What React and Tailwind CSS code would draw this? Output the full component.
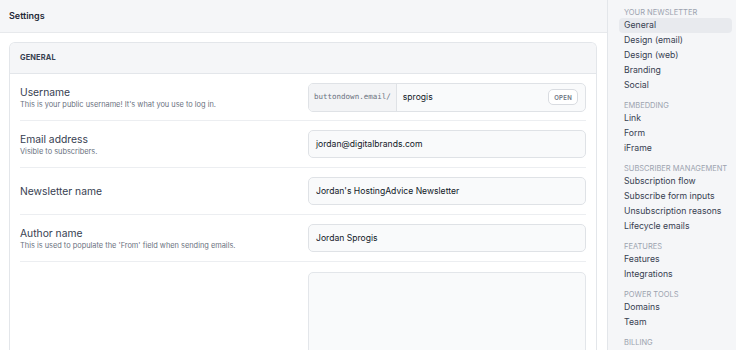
import React from 'react';

const nav = [
  { title: 'Your newsletter', items: ['General', 'Design (email)', 'Design (web)', 'Branding', 'Social'] },
  { title: 'Embedding', items: ['Link', 'Form', 'iFrame'] },
  {
    title: 'Subscriber management',
    items: ['Subscription flow', 'Subscribe form inputs', 'Unsubscription reasons', 'Lifecycle emails'],
  },
  { title: 'Features', items: ['Features', 'Integrations'] },
  { title: 'Power tools', items: ['Domains', 'Team'] },
  { title: 'Billing', items: ['Plans'] },
];

function Row({ label, hint, children }) {
  return (
    <div className="h-[46px] flex items-center justify-between">
      <div className="flex flex-col pt-[1px]">
        <span className="text-[10.3px] leading-[13px] text-[#374151]">{label}</span>
        {hint && <span className="text-[7.4px] leading-[10px] text-[#6b7280] mt-[1px]">{hint}</span>}
      </div>
      <div className="w-[278px]">{children}</div>
    </div>
  );
}

function Input({ value }) {
  return (
    <div className="h-[28px] rounded-[5px] border border-[#dfe2e6] bg-[#f9fafb] flex items-center px-[7px] text-[8.6px] text-[#111827]">
      {value}
    </div>
  );
}

export default function App() {
  return (
    <div className="flex w-[736px] h-[350px] overflow-hidden bg-white" style={{ fontFamily: 'Inter, "Noto Sans", sans-serif' }}>
      <div className="w-[607px] shrink-0 flex flex-col">
        <div className="h-[33px] shrink-0 bg-[#f5f6f8] border-b border-[#e7e9ec] flex items-center px-[9px]">
          <span className="text-[9px] font-semibold text-[#1f2937]">Settings</span>
        </div>
        <div className="px-[9px] pt-[9px] pr-[10px]">
          <div className="rounded-t-[6px] border border-[#e3e6ea] border-b-0 overflow-hidden">
            <div className="h-[31px] bg-[#f5f6f8] border-b border-[#e3e6ea] flex items-center px-[10px]">
              <span className="text-[7.4px] font-bold tracking-[0.02em] text-[#374151]">GENERAL</span>
            </div>
            <div className="px-[10px] flex flex-col">
              <Row label="Username" hint="This is your public username! It's what you use to log in.">
                <div className="h-[29px] rounded-[5px] border border-[#dfe2e6] bg-[#f9fafb] flex items-center overflow-hidden">
                  <div
                    className="h-full px-[5px] flex items-center bg-[#f3f4f6] border-r border-[#dfe2e6] text-[7.5px] text-[#6b7280]"
                    style={{ fontFamily: '"DejaVu Sans Mono", "Liberation Mono", monospace' }}
                  >
                    buttondown.email/
                  </div>
                  <span className="flex-1 px-[6px] text-[8.6px] text-[#111827]">sprogis</span>
                  <span className="mr-[7px] h-[16px] px-[5px] rounded-[5px] border border-[#d9dce1] bg-white flex items-center text-[6px] font-semibold tracking-[0.05em] text-[#6b7280]">
                    OPEN
                  </span>
                </div>
              </Row>
              <div className="border-t border-[#eceef1]">
                <Row label="Email address" hint="Visible to subscribers.">
                  <Input value="jordan@digitalbrands.com" />
                </Row>
              </div>
              <div className="border-t border-[#eceef1]">
                <Row label="Newsletter name">
                  <Input value="Jordan's HostingAdvice Newsletter" />
                </Row>
              </div>
              <div className="border-t border-[#eceef1]">
                <Row label="Author name" hint="This is used to populate the 'From' field when sending emails.">
                  <Input value="Jordan Sprogis" />
                </Row>
              </div>
              <div className="border-t border-[#eceef1] pt-[10px] flex justify-end">
                <div className="w-[278px] h-[120px] rounded-[5px] border border-[#e3e6ea] bg-[#f9fafb]" />
              </div>
            </div>
          </div>
        </div>
      </div>
      <div className="flex-1 bg-[#f5f6f8] border-l border-[#e3e6ea] pl-[11px] pr-[5px] pt-[8px]">
        {nav.map((g, gi) => (
          <div key={g.title} className={gi === 0 ? '' : 'mt-[8px]'}>
            <div className="px-[5px] text-[7.5px] leading-[10px] uppercase whitespace-nowrap text-[#9ca3af]">{g.title}</div>
            {g.items.map((it, i) => (
              <div
                key={it}
                className={`px-[5px] h-[15px] leading-[15px] text-[8.7px] whitespace-nowrap text-[#374151] rounded-[4px] ${gi === 0 && i === 0 ? 'bg-[#e8eaee]' : ''}`}
              >
                {it}
              </div>
            ))}
          </div>
        ))}
      </div>
    </div>
  );
}
